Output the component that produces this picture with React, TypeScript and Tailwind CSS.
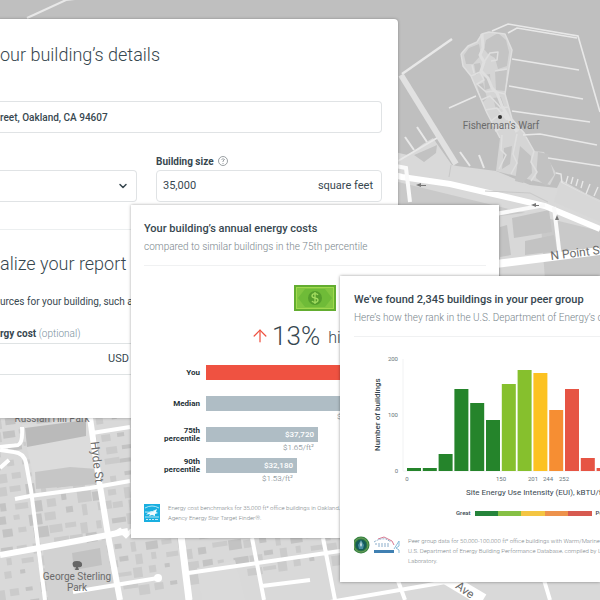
import { ArrowUp, ChevronDown } from "lucide-react";

const costs = [
  { label: "You", width: 180, color: "bg-[#ef5241]", value: "", rate: "" },
  { label: "Median", width: 166, color: "bg-[#afbdc5]", value: "", rate: "$1.85/ft²" },
  { label: "75th percentile", width: 112, color: "bg-[#afbdc5]", value: "$37,720", rate: "$1.65/ft²" },
  { label: "90th percentile", width: 91, color: "bg-[#afbdc5]", value: "$32,180", rate: "$1.53/ft²" },
];

const peers = [
  { height: 3, color: "#25842b" },
  { height: 3, color: "#25842b" },
  { height: 17, color: "#25842b" },
  { height: 82, color: "#25842b" },
  { height: 68, color: "#25842b" },
  { height: 51, color: "#25842b" },
  { height: 87, color: "#86c02d" },
  { height: 101, color: "#86c02d" },
  { height: 98, color: "#fcc221" },
  { height: 61, color: "#f68e33" },
  { height: 82, color: "#e65444" },
  { height: 13, color: "#e65444" },
  { height: 3, color: "#e65444" },
];

const ticks = [
  { x: 21, label: "0" },
  { x: 115, label: "150" },
  { x: 147, label: "201" },
  { x: 162, label: "244" },
  { x: 178, label: "252" },
];

// Small blocks scattered on the street grid
const blocks = Array.from({ length: 560 }, (_, i) => {
  const col = i % 40;
  const row = Math.floor(i / 40);
  const n = (i * 7919 + row * 104729) % 97;
  return {
    x: col * 16 + (n % 7),
    y: 440 + row * 14 + (n % 5),
    w: 5 + (n % 11),
    h: 4 + (n % 8),
    fill: n % 3 === 0 ? "#c3c3c3" : "#cbcbcb",
  };
});

function CityMap() {
  return (
    <svg
      aria-hidden="true"
      className="absolute inset-0 h-full w-full"
      viewBox="0 0 600 600"
      preserveAspectRatio="xMidYMid slice"
      fill="none"
    >
      <rect width="600" height="600" fill="#bfbfbf" />

      {/* Shoreline and city ground */}
      <path d="M390 151 430 160 457 166 496 171 530 185 557 188 561 180 585 193 600 200V600H0V400H390Z" fill="#d9d9d9" />
      <path d="M390 180 600 231V290H390Z" fill="#c9c9c9" />
      <path d="M390 154 402 160 423 144 433 138 454 168 496 172 530 188 546 190 546 202 390 174Z" fill="#d9d9d9" />
      <path d="M414 155 428 149 437 145 436 153 424 162Z" fill="#c2c2c2" />

      {/* Wharf */}
      <path d="M461 54 468 46 477 42 482 34 489 32 505 34 512 50 509 68 505 94 512 119 525 134 534 151 544 152 556 173 550 185 496 171 500 138 487 113 471 76 463 66Z" fill="#d5d5d5" />
      <path d="M464 55 469 48 479 44 481 55 473 64 466 64Z" fill="#c4c4c4" />
      <path d="M486 40 498 33 506 40 509 52 507 66 498 69 495 58 488 54 484 49Z" fill="#c4c4c4" />
      <path d="M474 64 480 63 482 71 476 75ZM484 75 490 74 491 88 485 90ZM495 71 507 70 505 91 496 90ZM477 85 483 83 487 98 482 103ZM493 98 501 97 504 106 496 109Z" fill="#c4c4c4" />
      <path d="M504 148 512 146 510 164 502 169ZM520 146 531 156 532 173 523 183 515 181ZM538 152 548 154 554 175 546 186 536 178Z" fill="#c2c2c2" />
      <g stroke="#dfdfdf" strokeWidth="1.5" strokeLinejoin="round">
        <path d="M461 54 468 46 477 42 482 34 489 32 505 34 512 50 509 68 505 94 512 119 525 134M461 54 463 66 471 76 487 113 500 138" />
        <path d="M482 34 483 48 480 55 484 62 481 71 488 78 492 88 497 93 502 106 517 132" strokeWidth="3" />
        <path d="M484 62 490 53 498 52 497 60 491 61M471 76 480 72 484 80 477 84 486 92 493 91 505 94M481 100 490 96 501 108 509 107M485 110 497 108 507 120M491 121 503 112 512 125M495 131 507 126 519 130M472 65 474 73M495 71 507 69" />
        <path d="M502 135 501 150 506 155 499 169M517 134 513 154 517 163 511 174M526 137 534 151 531 162 537 172 531 181" />
      </g>

      {/* Piers */}
      <g stroke="#e8e8e8" strokeWidth="1.6">
        <path d="M492 31 508 24 578 36 600 112M508 33 517 28 577 38M512 59 579 70M509 86 583 99M512 111 590 122M523 135 540 134 597 145M548 158 600 166M449 108 476 96" />
        <path d="M402 74 452 39" strokeWidth="2.5" />
        <path d="M401 75 456 164" strokeWidth="6" stroke="#e1e1e1" />
        <path d="M405 137 414 150M417 127 427 142M398 161 437 138M460 152 470 166M479 155 484 168" strokeWidth="2" />
        <path d="M556 173 561 174 562 183 600 203M566 183 568 176M571 184 573 177M576 186 578 179M581 188 583 181M586 194 590 184M594 196 598 187" strokeWidth="1.4" />
        <path d="M27 18 66 0 110-5" strokeWidth="2" />
      </g>
      <path d="M560 182 600 202 600 222 554 202Z" fill="#d7d7d7" />
      <path d="M500 216 540 211 545 280H500Z" fill="#d8d8d8" />
      <path d="M512 218 549 210 552 232 514 238ZM500 227 507 225 511 255 500 257ZM525 241 554 235 557 251 525 255Z" fill="#c3c3c3" />
      <path d="M390 174 402 177 450 184 545 206 600 229" stroke="#fff" strokeWidth="6" />
      <path d="M490 215 545 205M390 165 406 168 410 202M554 207 560 257" stroke="#fafafa" strokeWidth="4" />
      <path d="M480 266 600 251" stroke="#fff" strokeWidth="8" />
      <path d="M485 191 530 193 548 202M449 177 451 165" stroke="#c8c8c8" />
      <path d="m421 183-5 2 5 2v-1h5v-1h-5ZM536 203l-5 2 5 2v-1h3v-1h-3ZM555 220l2-5 2 5Z" fill="#777" />

      {/* City blocks */}
      <g transform="rotate(-8 200 500)">
        {blocks.map((b, i) => (
          <rect key={i} x={b.x - 20} y={b.y - 50} width={b.w} height={b.h} fill={b.fill} />
        ))}
      </g>
      <path d="M22 425 90 419 97 472 34 480Z" fill="#dcdcdc" />
      <path d="M25 428 86 420 86 436 27 447Z" fill="#bababa" />
      <path d="M35 472 70 467 98 469 97 484 36 489Z" fill="#c6c6c6" />
      <path d="M43 550 105 540 117 600H48Z" fill="#d2d2d2" />
      <path d="M72 553 100 548 102 565 74 570Z" fill="#c2c2c2" />
      <path d="M197 568 235 560 245 600H202Z" fill="#dadada" />
      <g stroke="#fff">
        <path d="M0 447 18 445Q23 443 22 427M0 450 14 452Q24 453 26 463L31 490 45 600" strokeWidth="4" />
        <path d="M0 555 39 548 108 535 128 531" strokeWidth="6" />
        <path d="M90 418 99 480 108 535 120 600" strokeWidth="6" />
        <path d="M15 499 30 496 90 488 130 481M92 433 130 427M0 468 9 460" strokeWidth="4" />
        <path d="M112 535 120 530 126 536 132 530M73 592 158 578M180 535 190 600" strokeWidth="4" />
        <path d="M181 535 189 600" strokeWidth="7" />
        <path d="M188 573 340 551M252 538 264 600M323 538 335 600M262 586 310 580" strokeWidth="4" />
        <path d="M330 602 446 582 600 570M397 578 405 600M544 580 550 600" strokeWidth="4" />
        <path d="M446 578 483 600" strokeWidth="13" />
      </g>
      <circle cx="158" cy="578" r="4" fill="#fff" />

      {/* Place names */}
      <circle cx="500" cy="117" r="2" fill="#333" />
      <path d="M73 566q-2-5 4-5t5 5q-2 2-4 1l1 3h-4l1-3q-2 1-3-1Z" fill="#666" />
      <g fill="#6b6b6b" fontFamily="Roboto, sans-serif" fontSize="10" textAnchor="middle">
        <text x="501" y="129">Fisherman's Warf</text>
        <text x="77" y="580">George Sterling</text>
        <text x="77" y="591">Park</text>
        <text x="52" y="422">Russian Hill Park</text>
        <text x="97" y="466" fontSize="12" transform="rotate(83 97 462)">Hyde St</text>
        <text x="465" y="594" fontSize="12" transform="rotate(36 465 590)">Ave</text>
        <text x="551" y="260" fontSize="12" textAnchor="start" transform="rotate(-7 551 260)">N Point St</text>
      </g>
    </svg>
  );
}

function MoneyIcon() {
  return (
    <svg aria-hidden="true" className="h-7 w-[42px]" viewBox="0 0 42 28">
      <path d="M0 1h42v26H0Z" fill="#63ad30" />
      <path d="M2 3h38v22H2Z" fill="#a1d94f" />
      <path d="M3 4h36v20H3Z" fill="#82c641" />
      <path d="M11 5h20l7 9-7 9H11l-7-9Z" fill="#6fbb38" />
      <circle cx="21" cy="14" r="7" fill="#559e2c" />
      <path d="M24 11c-1-2-6-2-6 1s6 1 6 4-5 3-6 1M21 8v12" fill="none" stroke="#a4dd60" strokeWidth="1.3" />
    </svg>
  );
}

function EnergyStarLogo() {
  return (
    <svg aria-hidden="true" className="h-[18px] w-4 shrink-0" viewBox="0 0 16 18">
      <path d="M0 0h16v18H0Z" fill="#19afe0" />
      <path d="M1 4Q8 0 15 4M1 13h14" fill="none" stroke="#d8f4fc" strokeWidth=".8" />
      <path d="m13 5-1 3 2 1-3 1v2l-3-1-3 1 1-2q-2 0-4 1 3-4 7-4Z" fill="#effbff" />
      <path d="M1 8q6 1 9-1M2 15.500h2m1 0h2m1 0h2m1 0h3" fill="none" stroke="#c0ebf8" />
    </svg>
  );
}

function AgencyLogos() {
  return (
    <svg aria-hidden="true" className="h-[18px] w-12 shrink-0" viewBox="0 0 48 18">
      <circle cx="7" cy="9" r="8.500" fill="#32813f" />
      <circle cx="7" cy="9" r="7" fill="none" stroke="#89a968" strokeWidth=".7" />
      <circle cx="7" cy="9" r="5.500" fill="#155b58" />
      <path d="m7 4 3 5-1 4H5L4 9Z" fill="#488da1" />
      <path d="m7 5 1 4-1 2-1-2Z" fill="#cbe4de" />
      <path d="M24 3 30 1l8 4 2 4" fill="none" stroke="#d87991" />
      <path d="M20 6q6-4 12-3l5 3M21 8h15M24 10h12" fill="none" stroke="#8caecb" strokeDasharray="2 1" />
      <path d="M20 14h20v3H20Z" fill="#4080b2" />
      <path d="m40 13 5-8v5l-3 2 3 2v3" fill="none" stroke="#89bcd9" />
    </svg>
  );
}

function DetailsCard() {
  return (
    <form className="absolute top-[19px] -left-0.5 h-[399px] w-2/3 overflow-hidden rounded-r-sm bg-white pl-0.5 text-[#37474f] shadow-[0_0_3px_rgba(0,0,0,0.3)]">
      <div className="pr-4">
        <h1 className="pt-6 text-lg leading-6 font-light whitespace-nowrap">our building’s details</h1>
        <input
          aria-label="Address"
          defaultValue="reet, Oakland, CA 94607"
          className="mt-[34px] block h-8 w-full rounded-r-sm border border-l-0 border-[#e0e3e5] text-[10px] font-medium"
        />
        <div className="mt-5 flex items-end gap-[19px]">
          <div className="relative w-[137px]">
            <select
              aria-label="Building type"
              className="block h-8 w-full appearance-none rounded-r-sm border border-l-0 border-[#e0e3e5] bg-white text-[11px]"
            >
              <option></option>
            </select>
            <ChevronDown className="pointer-events-none absolute top-2.5 right-2 h-3 w-3" strokeWidth={3} />
          </div>
          <div className="flex-1">
            <label htmlFor="size" className="mb-px flex h-4 items-center gap-1 text-[10px] font-bold">
              Building size
              <svg aria-hidden="true" className="h-2.5 w-2.5" viewBox="0 0 10 10" fill="none" stroke="#82898d" strokeWidth=".8">
                <circle cx="5" cy="5" r="4.500" />
                <path d="M3.500 3.500Q5 2 6.500 3.500L5 5v1M5 7v1" />
              </svg>
            </label>
            <div className="flex h-8 items-center rounded-sm border border-[#e0e3e5] pr-2 pl-1.5 text-[11px]">
              <input id="size" defaultValue="35,000" className="min-w-0 flex-1" />
              <span>square feet</span>
            </div>
          </div>
        </div>
      </div>
      <div className="mt-[27px] border-t border-[#eceff0] pr-4">
        <h2 className="pt-[22px] text-lg leading-6 font-light whitespace-nowrap">alize your report</h2>
        <p className="pt-[18px] text-[10px] leading-4 whitespace-nowrap">urces for your building, such a</p>
        <label htmlFor="cost" className="block pt-4 text-[10px] leading-4 font-bold">
          rgy cost <span className="font-light text-[#78909c]">(optional)</span>
        </label>
        <div className="mt-px flex h-8 items-center border-y border-[#dfe3e4] text-[11px]">
          <input id="cost" className="w-[108px]" />
          <span>USD</span>
        </div>
      </div>
    </form>
  );
}

function CostsCard() {
  return (
    <section className="absolute top-[205px] left-[131px] h-[333px] w-[368px] overflow-hidden bg-white px-[13px] text-[#37474f] shadow-[0_0_3px_rgba(0,0,0,0.35)]">
      <header className="border-b border-[#f0f1f2] pt-4 pb-2.5">
        <h2 className="text-[11px] leading-4 font-medium">Your building’s annual energy costs</h2>
        <p className="mt-0.5 text-[10px] leading-4 font-light text-[#78858b]">
          compared to similar buildings in the 75th percentile
        </p>
      </header>
      <div className="flex flex-col items-center pt-[18px]">
        <MoneyIcon />
        <p className="flex h-12 items-center gap-0.5 pr-2 text-[26px] font-light whitespace-nowrap">
          <ArrowUp className="h-5 w-5 text-[#ef5241]" strokeWidth={1.500} />
          13% <span className="ml-1.5 pt-1 text-base">higher</span>
        </p>
      </div>
      <div className="pt-[5px]">
        {costs.map((cost) => (
          <div key={cost.label} className="flex h-[31px] gap-1.5">
            <div className="flex h-4 w-14 items-center justify-end pl-4 text-right text-[8px] leading-2 font-bold text-[#263238]">
              {cost.label}
            </div>
            <div style={{ width: cost.width }}>
              <div className={`flex h-[15px] items-center justify-end pr-1 text-[8px] font-medium text-white ${cost.color}`}>
                {cost.value}
              </div>
              <div className="pr-1 text-right text-[8px] leading-3 font-light text-[#6e7a80]">{cost.rate}</div>
            </div>
          </div>
        ))}
      </div>
      <footer className="flex items-center gap-2 pt-3.5">
        <EnergyStarLogo />
        <p className="text-[6px] leading-[10px] font-light whitespace-nowrap text-[#7c8589]">
          Energy cost benchmarks for 35,000 ft² office buildings in Oakland, CA
          <br />
          Agency Energy Star Target Finder®.
        </p>
      </footer>
    </section>
  );
}

function PeerChart() {
  return (
    <svg
      className="block h-[133px] w-[246px] shrink-0"
      viewBox="0 0 246 133"
      role="img"
      aria-label="Buildings by energy use intensity"
    >
      <path d="M17 5v112h229" fill="none" stroke="#f1f2f3" />
      {peers.map((bar, i) => (
        <rect key={i} x={21 + i * 15.800} y={117 - bar.height} width="14" height={bar.height} fill={bar.color} />
      ))}
      <g fill="#69757b" fontSize="6" fontFamily="Roboto, sans-serif" textAnchor="end">
        <text x="12" y="7">200</text>
        <text x="12" y="63">100</text>
        <text x="12" y="119">0</text>
      </g>
      <g fill="#69757b" fontSize="6" fontFamily="Roboto, sans-serif" textAnchor="middle">
        {ticks.map((tick) => (
          <text key={tick.x} x={tick.x} y="127">
            {tick.label}
          </text>
        ))}
      </g>
    </svg>
  );
}

function PeersCard() {
  return (
    <section className="absolute top-[276px] right-0 left-[340px] h-[306px] overflow-hidden bg-white pl-3.5 text-[#37474f] shadow-[0_0_3px_rgba(0,0,0,0.4)]">
      <header className="border-b border-[#f0f1f2] pt-4 pb-2.5 whitespace-nowrap">
        <h2 className="text-[11px] leading-4 font-medium">We’ve found 2,345 buildings in your peer group</h2>
        <p className="mt-0.5 text-[10px] leading-4 font-light text-[#78858b]">
          Here’s how they rank in the U.S. Department of Energy’s database
        </p>
      </header>
      <div className="flex pt-[17px] pl-4">
        <p className="h-[122px] w-4 shrink-0 rotate-180 text-center text-[8px] leading-4 font-medium whitespace-nowrap [writing-mode:vertical-rl]">
          Number of buildings
        </p>
        <PeerChart />
      </div>
      <p className="pl-28 text-[8px] leading-3 whitespace-nowrap">Site Energy Use Intensity (EUI), kBTU/ft²</p>
      <div className="flex items-center gap-1 pt-2 pl-[102px] text-[6px] leading-3 font-medium">
        <span>Great</span>
        <div className="flex h-[5px] w-[117px] shrink-0">
          <div className="flex-1 bg-[#25843b]" />
          <div className="flex-1 bg-[#86c045]" />
          <div className="flex-1 bg-[#f4c542]" />
          <div className="flex-1 bg-[#ed924c]" />
          <div className="flex-1 bg-[#d75a50]" />
        </div>
        <span>Poor</span>
      </div>
      <footer className="flex gap-1.5 pt-[17px]">
        <AgencyLogos />
        <p className="text-[6px] leading-[10px] font-light whitespace-nowrap text-[#7c8589]">
          Peer group data for 50,000-100,000 ft² office buildings with Warm/Marine climate
          <br />
          U.S. Department of Energy Building Performance Database, compiled by Lawrence
          <br />
          Laboratory.
        </p>
      </footer>
    </section>
  );
}

export default function App() {
  return (
    <main className="relative min-h-screen overflow-hidden bg-[#bfbfbf] font-['Roboto',sans-serif]">
      <CityMap />
      <DetailsCard />
      <CostsCard />
      <PeersCard />
    </main>
  );
}
